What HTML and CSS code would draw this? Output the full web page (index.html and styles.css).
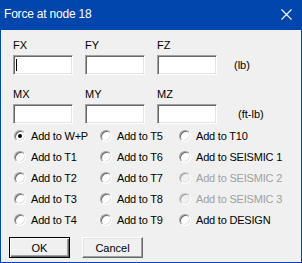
FILE: index.html
```html
<!DOCTYPE html>
<html>
<head>
<meta charset="utf-8">
<link rel="stylesheet" href="styles.css">
</head>
<body>
<div class="window">
  <div class="titlebar">
    <span class="title">Force at node 18</span>
    <svg class="close" width="11" height="11" viewBox="0 0 11 11"><path d="M0.5 0.5 L10.5 10.5 M10.5 0.5 L0.5 10.5" stroke="#fff" stroke-width="1.1" fill="none"/></svg>
  </div>
  <div class="client">
    <div class="field-row">
      <div class="field"><div class="label">FX</div><div class="edit"><span class="caret"></span></div></div>
      <div class="field"><div class="label">FY</div><div class="edit"></div></div>
      <div class="field"><div class="label">FZ</div><div class="edit"></div></div>
      <div class="unit">(lb)</div>
    </div>
    <div class="field-row second">
      <div class="field"><div class="label">MX</div><div class="edit"></div></div>
      <div class="field"><div class="label">MY</div><div class="edit"></div></div>
      <div class="field"><div class="label">MZ</div><div class="edit"></div></div>
      <div class="unit unit-ft">(ft-lb)</div>
    </div>
    <div class="radios">
      <div class="opt"><span class="radio checked"></span>Add to W+P</div>
      <div class="opt"><span class="radio"></span>Add to T5</div>
      <div class="opt"><span class="radio"></span>Add to T10</div>
      <div class="opt"><span class="radio"></span>Add to T1</div>
      <div class="opt"><span class="radio"></span>Add to T6</div>
      <div class="opt"><span class="radio"></span>Add to SEISMIC 1</div>
      <div class="opt"><span class="radio"></span>Add to T2</div>
      <div class="opt"><span class="radio"></span>Add to T7</div>
      <div class="opt disabled"><span class="radio"></span>Add to SEISMIC 2</div>
      <div class="opt"><span class="radio"></span>Add to T3</div>
      <div class="opt"><span class="radio"></span>Add to T8</div>
      <div class="opt disabled"><span class="radio"></span>Add to SEISMIC 3</div>
      <div class="opt"><span class="radio"></span>Add to T4</div>
      <div class="opt"><span class="radio"></span>Add to T9</div>
      <div class="opt"><span class="radio"></span>Add to DESIGN</div>
    </div>
    <div class="buttons">
      <button class="btn btn-default">OK</button>
      <button class="btn">Cancel</button>
    </div>
  </div>
</div>
</body>
</html>
```

FILE: styles.css
```css
html, body {
  margin: 0;
  padding: 0;
}
body {
  width: 302px;
  height: 263px;
  font-family: "Liberation Sans", Arial, sans-serif;
  font-size: 11px;
  color: #000;
  overflow: hidden;
}
.window {
  box-sizing: border-box;
  width: 302px;
  height: 263px;
  background: #0046ad;
  padding: 0 1px 1px 1px;
  display: flex;
  flex-direction: column;
}
.titlebar {
  height: 30px;
  flex: none;
  display: flex;
  align-items: center;
  justify-content: space-between;
  padding: 0 9px 2px 3px;
  box-sizing: border-box;
  color: #fff;
  font-size: 12px;
  letter-spacing: -0.2px;
}
.close {
  display: block;
}
.client {
  flex: 1;
  background: #f0f0f0;
  padding: 9px 0 0 8px;
}
.field-row {
  display: flex;
  align-items: flex-end;
  gap: 12px;
  margin-left: 4px;
}
.field-row.second {
  margin-top: 13px;
}
.field {
  display: flex;
  flex-direction: column;
  gap: 3px;
}
.label {
  line-height: 13px;
  height: 13px;
}
.edit {
  box-sizing: border-box;
  width: 60px;
  height: 20px;
  background: #fff;
  border: 1px solid;
  border-color: #a0a0a0 #fff #fff #a0a0a0;
  box-shadow: inset 1px 1px #696969, inset -1px -1px #e3e3e3;
  display: flex;
  align-items: center;
}
.caret {
  width: 1px;
  height: 12px;
  background: #000;
  margin-left: 2px;
}
.unit {
  line-height: 20px;
  margin-left: 5px;
}
.unit-ft {
  margin-left: 9px;
}
.radios {
  display: grid;
  grid-template-columns: 86px 79px auto;
  grid-auto-rows: 21px;
  margin: 1px 0 0 5px;
  letter-spacing: -0.2px;
}
.opt {
  display: flex;
  align-items: center;
  gap: 5px;
  white-space: nowrap;
}
.radio {
  box-sizing: border-box;
  width: 12px;
  height: 12px;
  flex: none;
  border-radius: 50%;
  border: 1px solid;
  border-color: #a0a0a0 #fff #fff #a0a0a0;
  background: #fff;
  box-shadow: inset 1px 1px #696969, inset -1px -1px #e3e3e3;
  display: grid;
  place-items: center;
}
.radio.checked::after {
  content: "";
  width: 4px;
  height: 4px;
  border-radius: 50%;
  background: #000;
}
.opt.disabled {
  color: #a0a0a0;
}
.opt.disabled .radio {
  background: #f0f0f0;
  border-color: #c8c8c8 #fff #fff #c8c8c8;
  box-shadow: inset 1px 1px #a0a0a0, inset -1px -1px #e3e3e3;
}
.buttons {
  display: flex;
  gap: 12px;
  margin-top: 7px;
}
.btn {
  box-sizing: border-box;
  width: 61px;
  height: 21px;
  padding: 0;
  margin: 0;
  font-family: "Liberation Sans", Arial, sans-serif;
  font-size: 11px;
  color: #000;
  background: #f0f0f0;
  border: 1px solid;
  border-color: #fff #696969 #696969 #fff;
  box-shadow: inset -1px -1px #a0a0a0, inset 1px 1px #e3e3e3;
}
.btn-default {
  border-color: #000;
  box-shadow: inset 1px 1px #fff, inset -1px -1px #696969, inset -2px -2px #a0a0a0;
}
```
